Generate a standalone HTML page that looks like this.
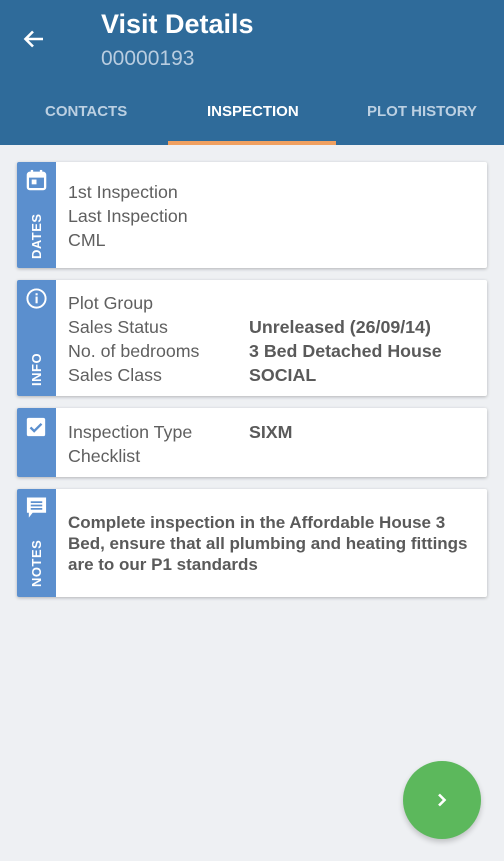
<!DOCTYPE html>
<html><head><style>
*{margin:0;padding:0;box-sizing:border-box}
body{width:504px;height:861px;background:#eef0f3;font-family:"Liberation Sans",sans-serif;position:relative;overflow:hidden}
.hdr{position:absolute;left:0;top:0;width:504px;height:145px;background:#2f6b9a}
.t1{position:absolute;left:101px;top:9px;color:#fff;font-size:27px;font-weight:bold}
.t2{position:absolute;left:101px;top:47px;color:#b9cde0;font-size:21px}
.tab{position:absolute;top:103px;font-size:15px;font-weight:bold;color:#bcd0e2}
.ul{position:absolute;left:168px;top:141px;width:168px;height:4px;background:#f0a060}
.card{position:absolute;left:17px;width:470px;background:#fff;box-shadow:0 1px 3px rgba(0,0,0,.25);border-radius:2px}
.side{position:absolute;left:0;top:0;bottom:0;width:39px;background:#5b8fce;border-radius:2px 0 0 2px}
.vl{position:absolute;color:#fff;font-size:13px;font-weight:bold;transform:rotate(-90deg);transform-origin:left top;letter-spacing:.5px}
.txt{position:absolute;left:51px;color:#5f5f5f;font-size:17.8px;line-height:24px;white-space:nowrap}
.val{position:absolute;left:232px;color:#5a5a5a;font-size:17.8px;line-height:24px;font-weight:bold;white-space:nowrap}
.fab{position:absolute;left:403px;top:761px;width:78px;height:78px;border-radius:50%;background:#5cb85c;box-shadow:0 3px 6px rgba(0,0,0,.2)}
</style></head><body>
<div class="hdr">
<svg style="position:absolute;left:22px;top:27px" width="24" height="24" viewBox="0 0 24 24"><path d="M21 12H4M11 4.5L3.5 12L11 19.5" stroke="#fff" stroke-width="2.6" fill="none"/></svg>
<div class="t1">Visit Details</div>
<div class="t2">00000193</div>
<div class="tab" style="left:45px">CONTACTS</div>
<div class="tab" style="left:207px;color:#fff">INSPECTION</div>
<div class="tab" style="left:367px">PLOT HISTORY</div>
<div class="ul"></div>
</div>

<div class="card" style="top:162px;height:106px">
<div class="side">
<svg style="position:absolute;left:8px;top:7px" width="23" height="23" viewBox="0 0 24 24"><rect x="3" y="4" width="18" height="17" rx="2" fill="none" stroke="#fff" stroke-width="2.4"/><rect x="3" y="4" width="18" height="5" fill="#fff"/><rect x="6" y="1" width="2.5" height="4" fill="#fff"/><rect x="15.5" y="1" width="2.5" height="4" fill="#fff"/><rect x="7" y="11" width="5" height="5" fill="#fff"/></svg>
<div class="vl" style="left:12px;top:97px">DATES</div>
</div>
<div class="txt" style="top:18px">1st Inspection<br>Last Inspection<br>CML</div>
</div>

<div class="card" style="top:280px;height:116px">
<div class="side">
<svg style="position:absolute;left:8px;top:7px" width="23" height="23" viewBox="0 0 24 24"><circle cx="12" cy="12" r="9.5" fill="none" stroke="#fff" stroke-width="2"/><rect x="11" y="10" width="2.2" height="7" fill="#fff"/><rect x="11" y="6.5" width="2.2" height="2.2" fill="#fff"/></svg>
<div class="vl" style="left:12px;top:106px">INFO</div>
</div>
<div class="txt" style="top:11px">Plot Group<br>Sales Status<br>No. of bedrooms<br>Sales Class</div>
<div class="val" style="top:35px">Unreleased (26/09/14)<br>3 Bed Detached House<br>SOCIAL</div>
</div>

<div class="card" style="top:408px;height:69px">
<div class="side">
<svg style="position:absolute;left:8px;top:8px" width="22" height="22" viewBox="0 0 24 24"><rect x="2" y="2" width="20" height="20" rx="2" fill="#fff"/><path d="M6 12.5l4 4 8-8" stroke="#5b8fce" stroke-width="2.6" fill="none"/></svg>
</div>
<div class="txt" style="top:12px">Inspection Type<br>Checklist</div>
<div class="val" style="top:12px">SIXM</div>
</div>

<div class="card" style="top:489px;height:108px">
<div class="side">
<svg style="position:absolute;left:8px;top:6px" width="23" height="26" viewBox="0 0 24 26"><path d="M2 2h20v16H8l-4 5v-5H2z" fill="#fff"/><rect x="6" y="6" width="12" height="1.8" fill="#5b8fce"/><rect x="6" y="9.5" width="12" height="1.8" fill="#5b8fce"/><rect x="6" y="13" width="12" height="1.8" fill="#5b8fce"/></svg>
<div class="vl" style="left:12px;top:98px">NOTES</div>
</div>
<div class="txt" style="top:23px;font-weight:bold;font-size:17px;line-height:21px;color:#5a5a5a">Complete inspection in the Affordable House 3<br>Bed, ensure that all plumbing and heating fittings<br>are to our P1 standards</div>
</div>

<div class="fab"><svg style="position:absolute;left:31px;top:31px" width="16" height="16" viewBox="0 0 16 16"><path d="M5 2.5l5.5 5.5L5 13.5" stroke="#fff" stroke-width="2.6" fill="none"/></svg></div>
</body></html>
